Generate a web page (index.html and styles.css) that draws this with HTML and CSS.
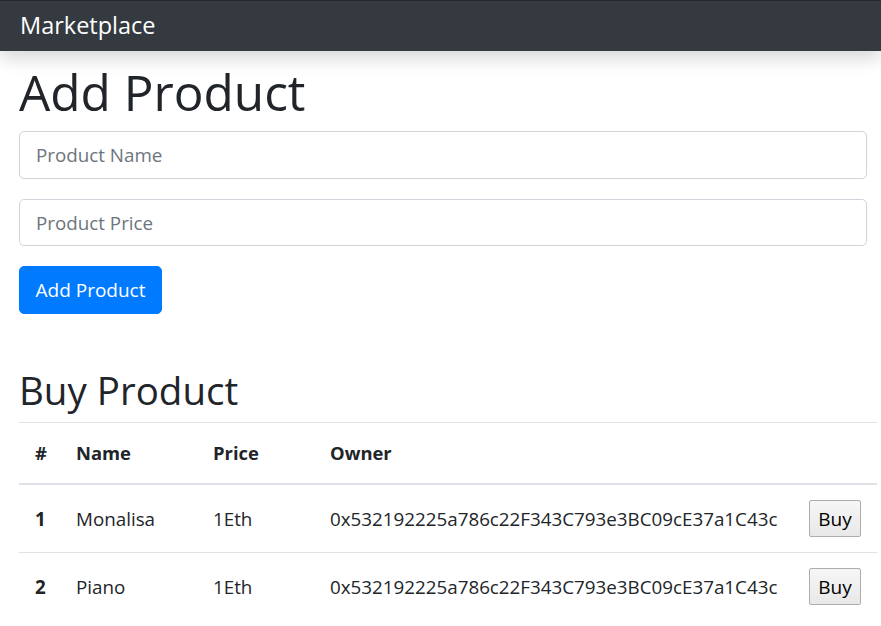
FILE: index.html
```html
<!DOCTYPE html>
<html lang="en">
<head>
<meta charset="utf-8">
<title>Marketplace</title>
<link rel="stylesheet" href="styles.css">
</head>
<body>
<nav class="navbar">
  <span class="brand">Marketplace</span>
</nav>
<main class="content">
  <h1 class="title">Add Product</h1>
  <form class="product-form">
    <input class="field" type="text" placeholder="Product Name">
    <input class="field" type="text" placeholder="Product Price">
    <button class="btn-primary" type="button">Add Product</button>
  </form>
  <h2 class="subtitle">Buy Product</h2>
  <table class="products">
    <colgroup>
      <col class="c-num"><col class="c-name"><col class="c-price"><col class="c-owner"><col class="c-buy">
    </colgroup>
    <thead>
      <tr><th>#</th><th>Name</th><th>Price</th><th>Owner</th><th></th></tr>
    </thead>
    <tbody>
      <tr>
        <th>1</th><td>Monalisa</td><td>1Eth</td><td>0x532192225a786c22F343C793e3BC09cE37a1C43c</td>
        <td><button class="btn-buy" type="button">Buy</button></td>
      </tr>
      <tr>
        <th>2</th><td>Piano</td><td>1Eth</td><td>0x532192225a786c22F343C793e3BC09cE37a1C43c</td>
        <td><button class="btn-buy" type="button">Buy</button></td>
      </tr>
    </tbody>
  </table>
</main>
</body>
</html>
```

FILE: styles.css
```css
* { box-sizing: border-box; }

body {
  margin: 0;
  font-family: "Open Sans", "Noto Sans", sans-serif;
  color: #212529;
  background: #fff;
}

.navbar {
  height: 51px;
  display: flex;
  align-items: center;
  padding-left: 20px;
  background: #343a40;
  border-top: 1px solid #25282c;
  box-shadow: 0 8px 16px rgba(0, 0, 0, 0.15);
  position: relative;
}

.brand {
  color: #fff;
  font-size: 23.5px;
  line-height: 1;
}

.content {
  padding: 0 4px 0 19px;
}

.title {
  margin: 11px 0 8px;
  font-size: 49.5px;
  font-weight: 400;
  line-height: 61px;
}

.product-form {
  width: 848px;
  display: flex;
  flex-direction: column;
  align-items: flex-start;
}

.field {
  width: 100%;
  height: 48px;
  margin-bottom: 20px;
  padding: 0 16px;
  border: 1px solid #ced4da;
  border-radius: 5px;
  font-family: inherit;
  font-size: 18.8px;
  color: #495057;
  background: #fff;
}

.field + .field { height: 47px; }

.field::placeholder { color: #6c757d; }

.btn-primary {
  width: 143px;
  height: 48px;
  padding: 0;
  border: 1px solid #007bff;
  border-radius: 5px;
  background: #007bff;
  color: #fff;
  font-family: inherit;
  font-size: 19px;
}

.subtitle {
  margin: 53px 0 8px;
  font-size: 38.5px;
  font-weight: 400;
  line-height: 47px;
}

.products {
  width: 858px;
  border-collapse: collapse;
  table-layout: fixed;
  font-size: 18.8px;
}

.c-num { width: 41px; }
.c-name { width: 137px; }
.c-price { width: 117px; }
.c-owner { width: 479px; }
.c-buy { width: 84px; }

.products th,
.products td {
  padding: 15px 0 15px 16px;
  text-align: left;
  white-space: nowrap;
  line-height: 30px;
  vertical-align: middle;
  border-top: 1px solid #dee2e6;
}

.products thead th {
  font-weight: 700;
  font-size: 18.4px;
  border-bottom: 2px solid #dee2e6;
}

.products tbody th { font-weight: 700; }

.btn-buy {
  display: block;
  width: 52px;
  height: 37px;
  padding: 0;
  border: 1px solid #adadad;
  border-radius: 2px;
  background: linear-gradient(#f6f6f6, #e8e8e8);
  color: #000;
  font-family: inherit;
  font-size: 19px;
}
```
